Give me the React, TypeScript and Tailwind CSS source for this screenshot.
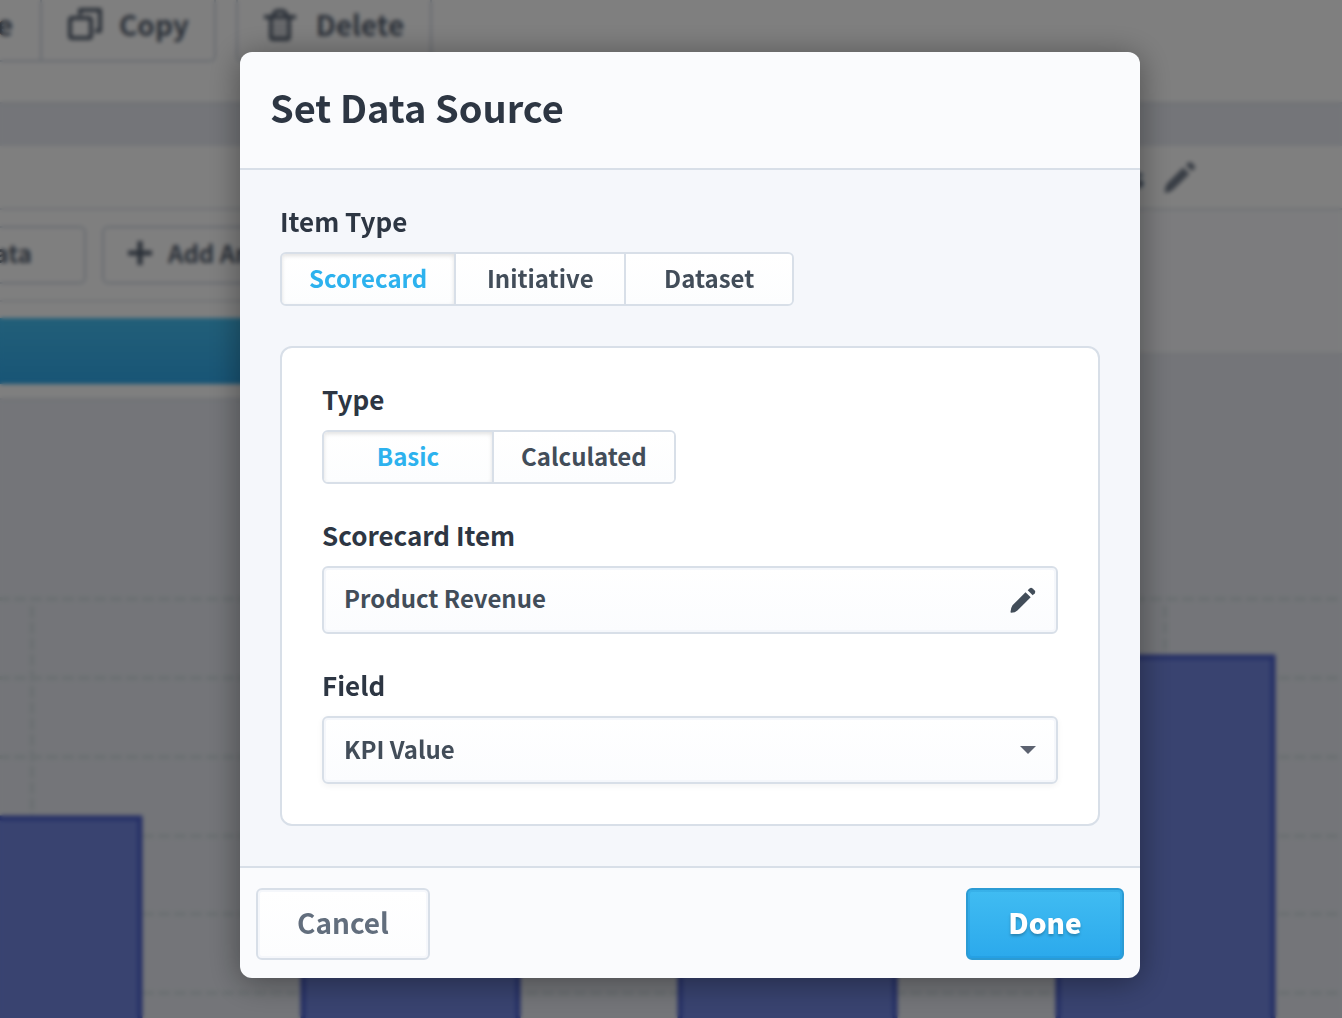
import { useState } from "react";

type SegmentedProps = {
    label: string,
    options: string[],
    value: string,
    onChange: (value: string) => void,
}

const bars = [
    { x: -77, top: 418 },
    { x: 301, top: 500 },
    { x: 678, top: 460 },
    { x: 1056, top: 257 },
]

const gridLines = [199, 278, 357, 436, 514, 593]

function PencilIcon({ className }: { className: string }) {
    return <svg viewBox="0 0 26 26" fill="currentColor" className={className} aria-hidden="true">
        <path d="M15.5 5.300 20.700 10.300 7.400 23.400Q5.200 25.600 1.200 25.700.500 25.700.500 25 .500 21.400 2.500 18.300Z" />
        <path d="M17.700 3.200 19.800 1.200Q21.200.2 22.600 1.500L24.700 3.600Q25.900 5 24.800 6.200L22.700 8.200Z" />
    </svg>
}

function CopyIcon() {
    return <svg viewBox="0 0 36 34" fill="none" stroke="currentColor" strokeWidth="4" strokeLinejoin="round" className="h-[34px] w-9" aria-hidden="true">
        <rect x="3" y="11" width="21" height="20" rx="2" />
        <path d="M13 8V3h20v21h-5" />
    </svg>
}

function TrashIcon() {
    return <svg viewBox="0 0 32 34" fill="none" stroke="currentColor" strokeWidth="4" strokeLinejoin="round" className="h-[34px] w-8" aria-hidden="true">
        <path d="M0 10h32" />
        <path d="M9 9q2-5 4-5h6q2 0 4 5" />
        <path d="M7 10v20q0 2 2 2h14q2 0 2-2V10" />
        <path d="M12 13v17M16 13v17M20 13v17" strokeWidth="2" opacity="0.6" />
    </svg>
}

function PlusIcon() {
    return <svg viewBox="0 0 24 24" stroke="currentColor" strokeWidth="5" className="size-6" aria-hidden="true">
        <path d="M12 0v24M0 12h24" />
    </svg>
}

function Segmented({ label, options, value, onChange }: SegmentedProps) {
    return <fieldset>
        <legend className="mb-3 text-[26px] leading-[38px] text-[#2d3643]">{label}</legend>
        <div className="flex w-fit overflow-hidden rounded-md border-2 border-[#d8dfe8]">
            {options.map((option) => {
                const active = option === value
                return <button
                    key={option}
                    type="button"
                    aria-pressed={active}
                    onClick={() => onChange(option)}
                    className={`box-content min-w-[114px] border-[#d8dfe8] bg-linear-to-b from-white to-[#fcfdfe] px-[27px] pb-[2px] text-2xl leading-[48px] not-last:border-r-2 last:min-w-[112px] ${active ? "text-[#2db2ee] shadow-[inset_0_2px_4px_rgba(0,0,0,0.12)]" : "text-[#424d59]"}`}
                >{option}</button>
            })}
        </div>
    </fieldset>
}

function Chart() {
    return <svg className="block min-h-[618px] w-full flex-1" aria-hidden="true">
        {gridLines.map((y) => (
            <line key={y} x1="-2" x2="100%" y1={y} y2={y} stroke="#d6dfe3" strokeWidth="4" strokeDasharray="12 4" />
        ))}
        {bars.map((bar) => <g key={bar.x}>
            <line x1={bar.x + 109} x2={bar.x + 109} y1="206" y2={bar.top} stroke="#d6dfe3" strokeWidth="4" strokeDasharray="12 4" />
            <rect x={bar.x + 2} y={bar.top} width="215" height="900" fill="#7287e1" stroke="#4a5fcc" strokeWidth="5" />
        </g>)}
    </svg>
}

function Workspace() {
    return <div className="flex min-h-screen flex-col overflow-hidden bg-[#e8ebf2] text-[#566171]">
        <header className="flex h-[104px] items-start border-b-2 border-[#dde2ea] bg-white text-[28px]">
            <div className="flex h-[62px] rounded-br-md border-r-2 border-b-2 border-[#d0d7e2]">
                <button type="button" className="flex w-[42px] items-center justify-end border-r-2 border-[#d0d7e2] pr-[27px] pb-3">e</button>
                <button type="button" className="flex items-center gap-4 px-[25px] pb-3"><CopyIcon />Copy</button>
            </div>
            <button type="button" className="ml-5 flex h-[62px] items-center gap-5 rounded-b-md border-2 border-t-0 border-[#d0d7e2] px-[26px] pb-3"><TrashIcon />Delete</button>
        </header>
        <div className="mt-[42px] flex h-[64px] items-center justify-end border-b-2 border-[#dde2ea] bg-white pr-[146px] text-[27px]">
            <span>s</span>
            <PencilIcon className="ml-5 size-8 text-[#727c8b]" />
        </div>
        <div className="flex h-[190px] items-start">
            <div className="h-full flex-1 border-b-2 border-[#dde2ea] bg-white">
                <div className="flex h-[92px] gap-4 border-b-2 border-[#e0e4eb] py-4 text-2xl">
                    <button type="button" className="flex w-[86px] items-center justify-end rounded-r-md border-2 border-l-0 border-[#d0d7e2] pr-[52px] pb-1">ata</button>
                    <button type="button" className="flex items-center gap-4 rounded-md border-2 border-[#d0d7e2] px-6 pb-1"><PlusIcon />Add An</button>
                </div>
                <div className="mt-4 h-[66px] bg-linear-to-b from-[#44bef2] to-[#30aaec]" />
            </div>
            <div className="h-[145px] flex-1 border-b-2 border-[#e2e6ed] bg-[#f8f9fc]" />
        </div>
        <Chart />
    </div>
}

export default function App() {
    const [itemType, setItemType] = useState<string>("Scorecard")
    const [type, setType] = useState<string>("Basic")

    return <div className="relative h-screen overflow-hidden font-['Noto_Sans_CJK_SC',sans-serif] font-bold">
        <Workspace />
        <div className="fixed inset-0 flex items-start justify-center overflow-auto bg-black/50 pt-[52px] pl-[38px] backdrop-blur-[2px]">
            <form role="dialog" aria-labelledby="dialog-title" onSubmit={(e) => e.preventDefault()} className="w-full max-w-[900px] overflow-hidden rounded-xl bg-[#fafbfd] shadow-[0_4px_32px_rgba(0,0,0,0.4)]">
                <div className="border-b-2 border-[#d8dfe8] px-[30px] pt-[25px] pb-[31px]">
                    <h1 id="dialog-title" className="text-[38px] leading-[60px] text-[#2d3643]">Set Data Source</h1>
                </div>
                <div className="flex flex-col gap-10 bg-[#f5f7fb] px-10 pt-8 pb-10">
                    <Segmented label="Item Type" options={["Scorecard", "Initiative", "Dataset"]} value={itemType} onChange={setItemType} />
                    <div className="flex flex-col gap-8 rounded-xl border-2 border-[#d8dfe8] bg-white px-10 pt-8 pb-10">
                        <Segmented label="Type" options={["Basic", "Calculated"]} value={type} onChange={setType} />
                        <div className="flex flex-col gap-3">
                            <label htmlFor="scorecard-item" className="text-[26px] leading-[38px] text-[#2d3643]">Scorecard Item</label>
                            <button id="scorecard-item" type="button" className="flex h-[68px] items-center justify-between rounded-md border-2 border-[#d8dfe8] bg-linear-to-b from-white to-[#fbfcfe] px-5 text-2xl text-[#424d59] shadow-[inset_0_0_0_2px_#f5f7fb]">
                                <span className="pb-1">Product Revenue</span>
                                <PencilIcon className="size-[26px]" />
                            </button>
                        </div>
                        <div className="flex flex-col gap-3">
                            <label htmlFor="field" className="text-[26px] leading-[38px] text-[#2d3643]">Field</label>
                            <div className="relative">
                                <select id="field" className="block h-[68px] w-full appearance-none rounded-md border-2 border-[#d8dfe8] bg-linear-to-b from-white to-[#fbfcfe] px-5 pb-[2px] text-2xl text-[#424d59] shadow-[inset_0_0_0_2px_#f5f7fb,0_2px_6px_rgba(0,0,0,0.05)]">
                                    <option>KPI Value</option>
                                </select>
                                <svg viewBox="0 0 16 8" className="pointer-events-none absolute top-[30px] right-[22px] h-2 w-4 fill-[#5c6270]" aria-hidden="true">
                                    <path d="M0 0h16L8 8Z" />
                                </svg>
                            </div>
                        </div>
                    </div>
                </div>
                <div className="flex justify-between border-t-2 border-[#d8dfe8] px-4 pt-5 pb-[18px] text-[28px]">
                    <button type="button" className="h-[72px] w-[174px] rounded-md border-2 border-[#d8dfe8] bg-linear-to-b from-white to-[#fcfdfe] pb-1 text-[#626e7d] shadow-[inset_0_0_0_2px_#f5f7fb]">Cancel</button>
                    <button type="submit" className="h-[72px] w-[158px] rounded-md border-2 border-[#2b9bd4] bg-linear-to-b from-[#40bcf2] to-[#2ba9ec] pb-1 font-black text-white shadow-[inset_0_0_0_2px_rgba(0,100,170,0.12)] text-shadow-[0_2px_3px_rgba(0,0,0,0.25)]">Done</button>
                </div>
            </form>
        </div>
    </div>
}
